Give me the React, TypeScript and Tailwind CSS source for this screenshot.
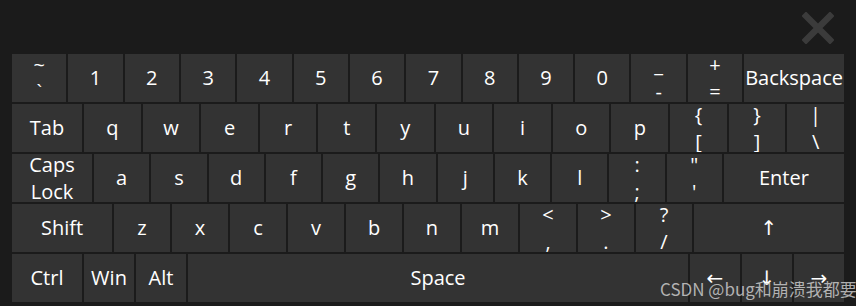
import React from "react";

type KeyDef = {
  top?: string;
  label: string;
  width?: string;
};

const rows: KeyDef[][] = [
  [
    { top: "~", label: "`" },
    { label: "1" },
    { label: "2" },
    { label: "3" },
    { label: "4" },
    { label: "5" },
    { label: "6" },
    { label: "7" },
    { label: "8" },
    { label: "9" },
    { label: "0" },
    { top: "_", label: "-" },
    { top: "+", label: "=" },
    { label: "Backspace", width: "w-[100px]" },
  ],
  [
    { label: "Tab", width: "w-[70px]" },
    { label: "q" },
    { label: "w" },
    { label: "e" },
    { label: "r" },
    { label: "t" },
    { label: "y" },
    { label: "u" },
    { label: "i" },
    { label: "o" },
    { label: "p" },
    { top: "{", label: "[" },
    { top: "}", label: "]" },
    { top: "|", label: "\\" },
  ],
  [
    { top: "Caps", label: "Lock", width: "w-[80px]" },
    { label: "a" },
    { label: "s" },
    { label: "d" },
    { label: "f" },
    { label: "g" },
    { label: "h" },
    { label: "j" },
    { label: "k" },
    { label: "l" },
    { top: ":", label: ";" },
    { top: "\"", label: "'" },
    { label: "Enter", width: "w-[120px]" },
  ],
  [
    { label: "Shift", width: "w-[100px]" },
    { label: "z" },
    { label: "x" },
    { label: "c" },
    { label: "v" },
    { label: "b" },
    { label: "n" },
    { label: "m" },
    { top: "<", label: "," },
    { top: ">", label: "." },
    { top: "?", label: "/" },
    { label: "↑", width: "w-[150px]" },
  ],
  [
    { label: "Ctrl", width: "w-[70px]" },
    { label: "Win", width: "w-[50px]" },
    { label: "Alt", width: "w-[50px]" },
    { label: "Space", width: "w-[500px]" },
    { label: "←", width: "w-[50px]" },
    { label: "↓", width: "w-[50px]" },
    { label: "→", width: "w-[50px]" },
  ],
];

function Key({ k }: { k: KeyDef }) {
  const size = k.width ? `${k.width} shrink-0` : "flex-1 min-w-0";
  return (
    <div
      className={`${size} h-[48px] bg-[#333333] text-white text-[20px] leading-[1.36] flex flex-col items-center justify-center overflow-hidden whitespace-nowrap`}
    >
      {k.top && <span>{k.top}</span>}
      <span>{k.label}</span>
    </div>
  );
}

export default function App() {
  return (
    <div className="relative w-[856px] h-[306px] bg-[#1b1b1b] overflow-hidden font-['Open_Sans','DejaVu_Sans',sans-serif]">
      <div className="h-[54px] flex justify-end items-start pt-[12px] pr-[22px]">
        <svg width="32" height="32" viewBox="0 0 32 32">
          <path d="M4 4 L28 28 M28 4 L4 28" stroke="#3b3b3b" strokeWidth="6.5" strokeLinecap="square" />
        </svg>
      </div>
      <div className="px-[12px] flex flex-col gap-[2px]">
        {rows.map((row, i) => (
          <div key={i} className="flex gap-[2px]">
            {row.map((k, j) => (
              <Key key={j} k={k} />
            ))}
          </div>
        ))}
      </div>
      <div className="absolute left-[660px] top-[280px] text-[17px] leading-none text-[rgba(215,215,215,0.78)] whitespace-nowrap font-['Noto_Sans_CJK_SC',sans-serif]">
        CSDN @bug和崩溃我都要
      </div>
    </div>
  );
}
